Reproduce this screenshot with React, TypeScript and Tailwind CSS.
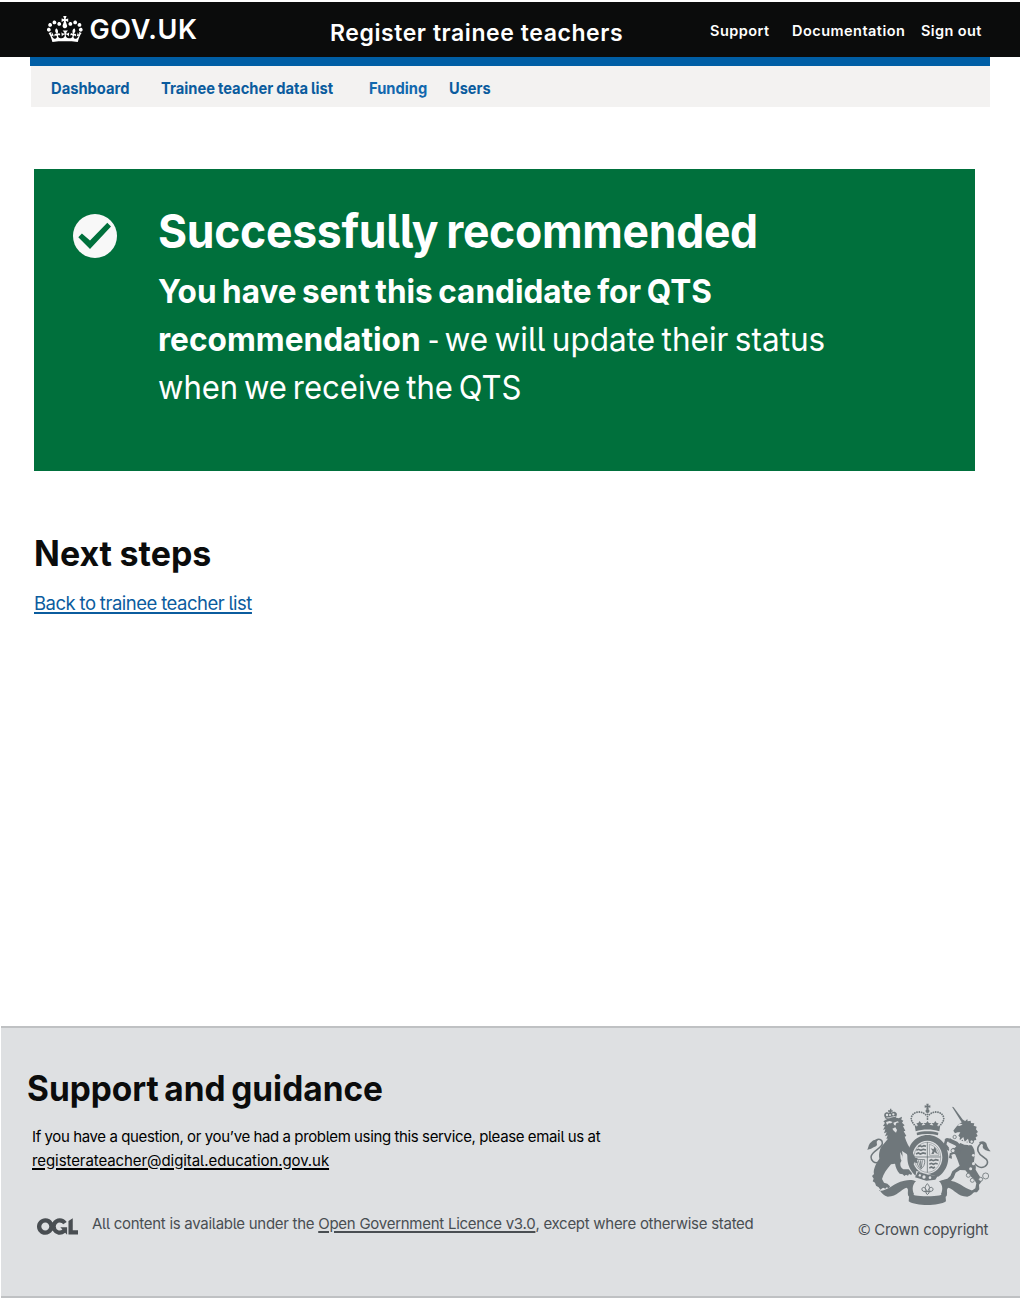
import type { ReactNode } from "react";

function CrownLogo() {
  return (
    <svg viewBox="0 0 36 32" className="h-[32px] w-[36px] shrink-0" fill="#fff" aria-hidden="true">
      <path d="M6.7 12.2c1 .4 2.1-.1 2.5-1s-.1-2.1-1-2.5c-1-.4-2.1.1-2.5 1-.4 1 0 2.1 1 2.5m-4.3 2.5c1 .4 2.1-.1 2.5-1s-.1-2.1-1-2.5c-1-.4-2.1.1-2.5 1-.5 1 0 2.1 1 2.5m-1.3 4.8c1 .4 2.1-.1 2.5-1 .4-1-.1-2.1-1-2.5-1-.4-2.1.1-2.5 1-.4 1 0 2.1 1 2.5m10.4-5.8c1 .4 2.1-.1 2.5-1s-.1-2.1-1-2.5c-1-.4-2.1.1-2.5 1s0 2.1 1 2.5m17.4-1.5c-1 .4-2.1-.1-2.5-1s.1-2.1 1-2.5c1-.4 2.1.1 2.5 1 .5 1 0 2.1-1 2.5m4.3 2.5c-1 .4-2.1-.1-2.5-1s.1-2.1 1-2.5c1-.4 2.1.1 2.5 1 .5 1 0 2.1-1 2.5m1.3 4.8c-1 .4-2.1-.1-2.5-1-.4-1 .1-2.1 1-2.5 1-.4 2.1.1 2.5 1 .4 1 0 2.1-1 2.5m-10.4-5.8c-1 .4-2.1-.1-2.5-1s.1-2.1 1-2.5c1-.4 2.1.1 2.5 1s0 2.1-1 2.5m-5.3-4.9 2.4 1.3V6.5l-2.4.8c-.1-.1-.1-.2-.2-.2s1-3 1-3h-3.4l1 3c-.1.1-.2.1-.2.2-.1.1-2.4-.7-2.4-.7v3.5L17 8.8c-.1.1 0 .2.1.3l-1.4 4.2c-.1.2-.1.4-.1.7 0 1.1.8 2.1 1.9 2.2h.8c1.1-.1 1.9-1.1 1.9-2.1 0-.2 0-.4-.1-.7l-1.4-4.2c.2-.2.2-.3.3-.4m-1 20.3c4.6 0 8.9.3 12.8.9 1.1-4.6 2.4-7.2 3.8-9.1l-2.6-.9c.3 1.3.3 1.9 0 2.8-.4-.4-.8-1.2-1.1-2.4l-1.2 4.2c.8-.5 1.4-.9 2-.9-1.2 2.6-2.7 3.2-3.6 3-1.2-.2-1.7-1.3-1.5-2.2.3-1.3 1.6-1.6 2.2-.1 1.2-2.4-.8-3.1-2.1-2.4 1.9-1.9 2.2-3.6.6-5.7-2.2 1.7-2.2 3.3-1.2 5.6-1.3-1.5-3.3-.7-2.5 1.7.9-1.4 2.1-.5 1.9.8-.2 1.2-1.7 2.1-3.7 1.9-2.8-.2-3-2.2-3-3.7.7-.1 1.9.5 3 2l.4-4.4c-1.1 1.2-2.2 1.4-3.3 1.4.4-1.2 2.1-3.1 2.1-3.1h-5.4s1.7 1.9 2.1 3.1c-1.1 0-2.2-.2-3.3-1.4l.4 4.4c1.1-1.5 2.3-2.1 3-2-.1 1.6-.2 3.5-3 3.7-1.9.2-3.5-.7-3.7-1.9-.2-1.3 1-2.2 1.9-.8.7-2.4-1.3-3.1-2.6-1.7 1-2.3 1-4-1.2-5.6-1.6 2.1-1.3 3.8.6 5.7-1.3-.7-3.2 0-2.1 2.4.6-1.5 1.9-1.1 2.2.1.2.9-.4 1.9-1.5 2.2-1 .2-2.4-.4-3.6-3 .7 0 1.2.3 2 .9l-1.2-4.2c-.3 1.1-.7 1.9-1.1 2.4-.3-.8-.2-1.4 0-2.8l-2.9.9c1.4 2 2.7 4.6 3.8 9.1 3.9-.6 8.2-.9 12.8-.9" />
    </svg>
  );
}

function OglLogo() {
  return (
    <svg viewBox="0 0 483.2 195.7" className="mt-px h-[17px] w-[41px] shrink-0" fill="#494e52" aria-hidden="true">
      <path d="M421.5 142.8V.1l-50.7 32.3v161.1h112.4v-50.7zm-122.3-9.6A47.12 47.12 0 0 1 221 97.8c0-26 21.1-47.1 47.1-47.1 16.7 0 31.4 8.7 39.7 21.8l42.7-27.2A97.63 97.63 0 0 0 268.1 0c-36.5 0-68.3 20.1-85.1 49.7A98 98 0 0 0 97.8 0C43.9 0 0 43.9 0 97.8s43.9 97.8 97.8 97.8c36.5 0 68.3-20.1 85.1-49.7a97.76 97.76 0 0 0 149.6 25.4l19.4 22.2h3v-87.8h-80l24.3 27.5zM97.8 145c-26 0-47.1-21.1-47.1-47.1s21.1-47.1 47.1-47.1 47.1 21.1 47.1 47.1S123.8 145 97.8 145" />
    </svg>
  );
}

function CoatOfArms({ className }: { className: string }) {
  return (
    <svg viewBox="50 40 372 310" className={className} fill="#6f777b" stroke="none" aria-hidden="true">
      {/* St Edward's crown */}
      <path d="M228 42h7l-1 6 6-1v7l-6-1 1 5h-7l1-5-6 1v-7l6 1z" />
      <circle cx="231.500" cy="64" r="6" />
      <g fill="none" stroke="#6f777b" strokeWidth="5.500" strokeLinecap="round" strokeDasharray="0.1 6.800">
        <path d="M226 75C212 62 190 66 184 80c-5 12 5 22 13 31" />
        <path d="M237 75c14-13 36-9 42 5 5 12-5 22-13 31" />
        <path d="M231.500 74v20" />
      </g>
      <path d="M194 112c25-8 50-8 75 0l-2 13c-22-7-49-7-71 0z" />
      <path d="M199 129c21-6 44-6 65 0l-1 8c-20-5-43-5-63 0z" />
      <path d="M208 94l4 6 7 1-5 5 2 7h-16l2-7-4-5 6-1zM231.500 94l4 6 8 1-6 5 3 6h-18l3-6-6-5 8-1zM255 94l4 6 6 1-4 5 2 7h-16l2-7-5-5 7-1z" />

      {/* Garter and shield */}
      <path fillRule="evenodd" d="M232 136c35 0 62 30 62 67s-27 68-62 68-61-31-61-68 26-67 61-67zm-1 17c-25 0-45 22-45 50s20 50 45 50 45-22 45-50-20-50-45-50z" />
      <path fill="none" stroke="#6f777b" strokeWidth="1.500" d="M231 158c-22 0-40 20-40 45s18 45 40 45 40-19 40-45-18-45-40-45z" />
      <path fill="none" stroke="#6f777b" strokeWidth="2.500" d="M231 157v92M191 202h80" />
      <g fill="none" stroke="#6f777b" strokeWidth="5">
        <path d="M203 171l6-3 5 3 7-3 6 2M198 182l6-3 8 3 7-3 8 2M197 193l7-3 6 3 8-3 9 2" />
        <path d="M237 213l6-3 6 3 7-3 9 2M237 224l6-3 6 3 7-3 6 2M237 235l6-3 6 3 5-3" />
      </g>
      <path fill="none" stroke="#6f777b" strokeWidth="1.500" d="M237 164c18 5 27 17 29 33h-28z" />
      <path d="M243 193l4-9-6-8 9 3 2-8 5 6 2 10 5 6-7-2-4-5-3 7z" />
      <path fill="none" stroke="#6f777b" strokeWidth="2.500" d="M198 209l25 1c2 14-4 23-12 29-6-7-12-17-13-30zM204 212l7 24M210 212l2 22M216 212l-3 22" />
      <path fill="#dee0e2" d="M198 244l66 17-4 11-65-8z" />
      <path d="M203 246l31 9 28 4-7 11-27 3-34-10z" />
      <path fill="#dee0e2" d="M207 253l6 2-3 6-6-2zM221 257a5 5 0 1 1 0 10 5 5 0 0 1 0-10zM239 260a4 4 0 1 1 0 8 4 4 0 0 1 0-8z" />

      {/* Lion */}
      <path d="M119 57h4v5h4v4h-4v4c6-6 13-4 16 1 2 5-1 9-3 15-10-3-20-2-29 3-3-6-7-10-5-16 3-6 9-7 15-3v-4h-4v-4h6z" />
      <g fill="#dee0e2">
        <circle cx="110" cy="76" r="3.500" />
        <circle cx="119" cy="76" r="3" />
        <circle cx="129" cy="74" r="3.500" />
        <path d="M107 84l28-5 1 2-28 5z" />
      </g>
      <path d="M105 92c9-8 28-11 40-6l10-5-2 9 6 3-4 6 8 8-5 3 7 13-5 2 8 14-5 2 5 14 4 9 8 14 8 13 6 13 8 2-2 7 3 6-7 1-3-4-3 7-6-2-1-9-14-19-14-9c3 14 2 25-5 36-1 10 3 15 9 19l16 0 10 12-2 5-7-3-3 5-6-3-5 4-5-5-9-2c-8-9-12-19-14-30l-12 2c-13 15-23 29-27 44l6 11 10 3 8 8-3 6-7-3-4 4-7-3-8 6-5-7-8-5-3-9-7-4 3-8-5-8 6-6c-3-10 3-28 16-46-3-17 2-34 13-44l13-16-5 0 4-10-8 3 5-12-8 3 4-12-7 1 6-10-6-1 6-10-5-3 6-6-3-5z" />
      <path fill="#dee0e2" d="M107 97l11-3 9 3-5 4-7 0-5 5zM129 99l13-4 4 3-8 2-3 8-4-3zM126 117l9-4 5 8-3 8-7-6zM149 187l8 14 0 17-6-10z" />
      <path fill="none" stroke="#6f777b" strokeWidth="4.500" d="M85 218c-13 4-23-4-23-16 0-17 33-26 34-40 1-11-8-17-20-10" />
      <path d="M51 181c4-11 4-18 12-24 6-7 14-9 20-5-6 3-3 8-3 14-4 7-9 5-14 9-3 2-8 3-15 6z" />

      {/* Unicorn */}
      <path d="M305 51l5 2 31 42-6 4z" />
      <path d="M336 97l4-7 4 5 7-7 1 7 9-2 1 7 10 1-2 7 9 3-2 8 6 8-5 4 4 8-6 4 2 8-6 1-2 6-4 5-39-12 2-8-5-5 6-10-8 0-8 3-5-8 6-8 8-10z" />
      <path fill="#dee0e2" d="M320 107l9-5 8 2-4 3-6 2z" />
      <path d="M330 160l12 5 22 2c7 8 11 20 9 31l-2 18c4 6 7 14 5 24l10 17 9 13-4 9-5 6 1 14-7 9-12 0-4-5 11-7 3-15-6-11-16-15-11-13-16-1-13 8-6 15-9 11-15 4-9 1-4-5 7-5 11-3 9-8 6-14 22-17-7-19-7-17-4-15z" />
      <g fill="none" stroke="#6f777b" strokeLinejoin="round">
        <path strokeWidth="12" d="M335 180l-17-18-21-10" />
        <path strokeWidth="8" d="M302 154l-14-3-4 14 9 12" />
        <path strokeWidth="10" d="M331 188l-17 1-8-12" />
        <path strokeWidth="6" d="M315 188l-14 5-1 9" />
      </g>
      <path d="M282 149l8-4 12 2-7 7zM289 172l8 5-2 7-7-5zM297 198l7 1 1 8-9-2z" />
      <g fill="none" stroke="#dee0e2" strokeWidth="4">
        <path d="M315 151l8-7 5 11 10-9 4 14 10-9 4 14 9-7" />
      </g>
      <g fill="#dee0e2" stroke="#6f777b" strokeWidth="2.500">
        <circle cx="313" cy="142" r="5" />
        <circle cx="364" cy="156" r="5" />
        <circle cx="308" cy="183" r="6" />
        <circle cx="354" cy="257" r="6" />
        <circle cx="366" cy="272" r="6" />
        <circle cx="391" cy="269" r="6" />
        <circle cx="406" cy="259" r="9" />
      </g>
      <g fill="#dee0e2">
        <circle cx="369" cy="197" r="4" />
        <circle cx="370" cy="222" r="5" />
        <circle cx="361" cy="237" r="4.500" />
      </g>
      <path fill="none" stroke="#6f777b" strokeWidth="4.500" d="M374 222c8 11 18 14 29 9 14-9 10-21-4-29-16-9-22-24-12-36 7-8 14-9 20-3" />
      <path d="M387 157c11-5 18-2 22 7 2 8 5 14 12 21-11-1-21-4-24-13 3-7-1-11-10-10z" />

      {/* Motto scroll */}
      <path d="M87 304c32-3 40-24 75-31 14-3 25-3 35 2-10 8-13 24-6 38l-7 12-10-6c-4-13 3-21-6-25-19 7-25 25-56 27-11-2-18-11-25-21z" />
      <path d="M376 304c-32-3-40-24-75-31-14-3-25-3-35 2 10 8 13 24 6 38l7 12 10-6c4-13-3-21 6-25 19 7 25 25 56 27 11-2 18-11 25-21z" />
      <path d="M177 310c10 6 22 10 54 10s44-4 54-10l2 25c-22 15-90 15-112 0z" />
      <path fill="none" stroke="#6f777b" strokeWidth="3" d="M231 282c-9 10-8 15 0 23 8-8 9-13 0-23zM227 301c-3-12-14-9-12 0 2 6 9 5 12 2v7l4 5 5-5v-7c4 3 10 3 12-2 1-9-9-12-13 0M222 306h19" />
    </svg>
  );
}

function NavLink({ children, className }: { children: ReactNode; className: string }) {
  return (
    <a href="#" className={`origin-left whitespace-nowrap ${className}`}>
      {children}
    </a>
  );
}

export default function App() {
  return (
    <div className="flex h-[1302px] w-[1020px] flex-col overflow-hidden bg-white pt-[2px] pb-[4px] font-['Inter',sans-serif] text-[#0b0c0c] [font-feature-settings:'cv05']">
      <header className="flex h-[55px] shrink-0 items-start bg-[#0b0c0c] text-white">
        <a href="#" className="flex w-[330px] items-start pt-[9.500px] pl-[46.500px]">
          <CrownLogo />
          <span className="ml-[7px] pt-[1.500px] text-[27px] leading-[34px] font-semibold tracking-[0.6px]">GOV.UK</span>
        </a>
        <span className="w-[380px] pt-[16px] text-[23px] leading-[30px] font-semibold tracking-[0.57px]">Register trainee teachers</span>
        <nav className="flex pt-[19px] text-[14.5px] leading-[20px] font-semibold whitespace-nowrap">
          <NavLink className="w-[82px] tracking-[0.45px]">Support</NavLink>
          <NavLink className="w-[129px] tracking-[0.47px]">Documentation</NavLink>
          <NavLink className="tracking-[0.4px]">Sign out</NavLink>
        </nav>
      </header>

      <div className="mx-[30px] h-[9px] shrink-0 bg-[#005ea5]" />
      <nav className="mr-[30px] ml-[31px] flex h-[41px] shrink-0 items-center bg-[#f3f2f1] pt-[3px] pl-[19.500px] text-[16px] font-bold text-[#0b5c9e]">
        <NavLink className="w-[110.500px] scale-x-[0.92]">Dashboard</NavLink>
        <NavLink className="w-[207.500px] scale-x-[0.92] [word-spacing:-0.6px]">Trainee teacher data list</NavLink>
        <NavLink className="w-[80px] scale-x-[0.92] text-[#1268ae]">Funding</NavLink>
        <NavLink className="scale-x-[0.91]">Users</NavLink>
      </nav>

      <main className="flex flex-1 flex-col items-start pt-[62px] pl-[34px]">
        <section className="flex h-[302px] w-[941px] items-start bg-[#00703c] pt-[38px] pl-[39px] text-white">
          <svg viewBox="0 0 44 44" className="mt-[7px] size-[44px] shrink-0" aria-hidden="true">
            <circle cx="22" cy="22" r="22" fill="#f8f8f8" />
            <path d="M5.300 23.300 8.900 19.500 17 26.500 34.300 8.700 38 12.500 17 35z" fill="#00703c" />
          </svg>
          <div className="ml-[40.500px] whitespace-nowrap">
            <h1 className="origin-left scale-x-[0.946] text-[47px] leading-[48px] font-bold tracking-[-0.3px] [word-spacing:-2.500px]">Successfully recommended</h1>
            <p className="mt-[11.500px] text-[33px] leading-[48px]">
              <strong className="inline-block origin-left scale-x-[0.955] font-bold [word-spacing:-2px]">You have sent this candidate for QTS</strong>
              <br />
              <strong className="-mr-[12px] inline-block origin-left scale-x-[0.958] font-bold">recommendation</strong>
              <span className="-mr-px font-['Noto_Sans',sans-serif]"> -</span>
              <span className="inline-block origin-left scale-x-[0.955] whitespace-pre [word-spacing:-2.500px]"> we will update their status</span>
              <br />
              <span className="inline-block origin-left scale-x-[0.94] [word-spacing:-3px]">when we receive the QTS</span>
            </p>
          </div>
        </section>

        <h2 className="mt-[59px] origin-left scale-x-[0.97] text-[35px] leading-[46px] font-bold [word-spacing:-0.5px]">Next steps</h2>
        <a href="#" className="mt-[14.500px] text-[18.500px] leading-[24px] tracking-[-0.49px] text-[#0b5c9e] underline decoration-[1.500px] underline-offset-[2px] [word-spacing:-0.4px]">
          Back to trainee teacher list
        </a>
      </main>

      <footer className="ml-px flex h-[272px] shrink-0 border-y-2 border-[#bfc1c3] bg-[#dee0e2]">
        <div className="w-[857px] pt-[36.500px] pl-[26px] whitespace-nowrap">
          <h2 className="origin-left scale-x-[0.955] text-[35px] leading-[46px] font-bold [word-spacing:-2.500px]">Support and guidance</h2>
          <p className="mt-[14px] pl-[5px] text-[15px] leading-[24px] text-black">
            <span className="tracking-[-0.35px] [word-spacing:-0.2px]">If you have a question, or you’ve had a problem using this service, please email us at</span>
            <br />
            <a href="#" className="tracking-[-0.08px] underline decoration-[1.500px] underline-offset-[2px]">registerateacher@digital.education.gov.uk</a>
          </p>
          <div className="mt-[44px] flex items-center pl-[9.500px] text-[15px] leading-[20px] text-[#494e52]">
            <OglLogo />
            <p className="-mt-[3px] ml-[14.500px]">
              <span className="tracking-[-0.28px]">All content is available under the </span>
              <a href="#" className="tracking-[-0.26px] underline decoration-[1.500px] underline-offset-[2px]">Open Government Licence v3.0</a>
              <span className="tracking-[-0.28px]">, except where otherwise stated</span>
            </p>
          </div>
        </div>
        <div className="flex flex-col items-start pt-[75px]">
          <div className="pl-[8.500px]">
            <CoatOfArms className="h-[103.3px] w-[124px]" />
          </div>
          <a href="#" className="mt-[12.500px] text-[15px] leading-[20px] tracking-[-0.25px] whitespace-nowrap text-[#494e52]">
            <span className="font-['Noto_Sans',sans-serif]">©</span> Crown copyright
          </a>
        </div>
      </footer>
    </div>
  );
}
